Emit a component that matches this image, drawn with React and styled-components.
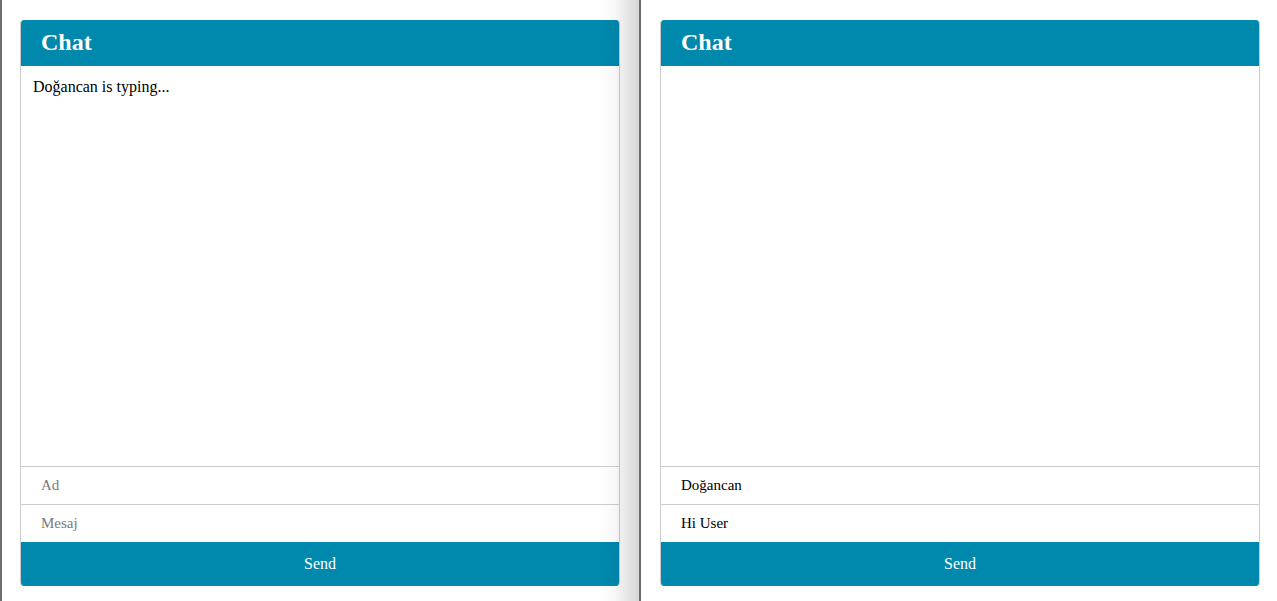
import React, { useState } from 'react'
import styled, { createGlobalStyle } from 'styled-components'

const GlobalStyle = createGlobalStyle`
    html, body {
        margin: 0;
        padding: 0;
        background: #fff;
        font-family: "Liberation Serif", "Times New Roman", serif;
    }
`;

const Screen = styled.div`
    display: flex;
    height: 601px;
    overflow: hidden;
`;

const Pane = styled.div`
    position: relative;
    box-sizing: border-box;
    width: ${p => p.width || 'auto'};
    flex: ${p => p.width ? 'none' : '1'};
    padding: 20px 0 0 ${p => p.edge ? '18px' : '19px'};
    border-left: ${p => p.edge ? '2px solid #6f6f6f' : 'none'};
`;

const Shade = styled.div`
    position: absolute;
    top: 0;
    right: 0;
    bottom: 0;
    width: 40px;
    pointer-events: none;
    background: linear-gradient(to right, rgba(0,0,0,0), rgba(0,0,0,0.03) 40%, rgba(0,0,0,0.16));
`;

const Divider = styled.div`
    width: 2px;
    background: #6b6b6b;
    flex: none;
`;

const Card = styled.div`
    box-sizing: border-box;
    width: 600px;
    display: flex;
    flex-direction: column;
    border-left: 1px solid #cccccc;
    border-right: 1px solid #cccccc;
    border-radius: 4px;
    overflow: hidden;
`;

const Header = styled.div`
    height: 46px;
    background: #0088ad;
    padding-left: 21px;
    margin: 0 -1px;
    h2 {
        margin: 0;
        color: #fff;
        font-family: "Liberation Serif", "Times New Roman", serif;
        font-size: 24px;
        font-weight: bold;
        line-height: 45px;
    }
`;

const Messages = styled.div`
    height: 400px;
    box-sizing: border-box;
    padding: 12px 12px;
    font-family: "Liberation Serif", "Times New Roman", serif;
    font-size: 16px;
    color: #000;
`;

const Field = styled.input`
    display: block;
    box-sizing: border-box;
    width: 100%;
    height: 38px;
    border: none;
    border-top: 1px solid #cccccc;
    padding: 0 20px;
    font-family: "Liberation Serif", "Times New Roman", serif;
    font-size: 15px;
    color: #000;
    outline: none;
    background: #fff;
    &::placeholder {
        color: #7a7a7a;
    }
`;

const SendButton = styled.button`
    height: 44px;
    margin: 0 -1px;
    border: none;
    background: #0088ad;
    color: #fff;
    font-family: "Liberation Serif", "Times New Roman", serif;
    font-size: 16px;
    cursor: pointer;
`;

const ChatBox = ({ typing, name, message }) => {
    const [ad, setAd] = useState(name || '');
    const [mesaj, setMesaj] = useState(message || '');
    return (
        <Card>
            <Header><h2>Chat</h2></Header>
            <Messages>{typing && <div>{typing} is typing...</div>}</Messages>
            <Field placeholder="Ad" value={ad} onChange={e => setAd(e.target.value)} />
            <Field placeholder="Mesaj" value={mesaj} onChange={e => setMesaj(e.target.value)} />
            <SendButton>Send</SendButton>
        </Card>
    )
}

export default function App() {
    return (
        <Screen>
            <GlobalStyle />
            <Pane width="639px" edge>
                <ChatBox typing="Doğancan" />
                <Shade />
            </Pane>
            <Divider />
            <Pane>
                <ChatBox name="Doğancan" message="Hi User" />
            </Pane>
        </Screen>
    )
}
